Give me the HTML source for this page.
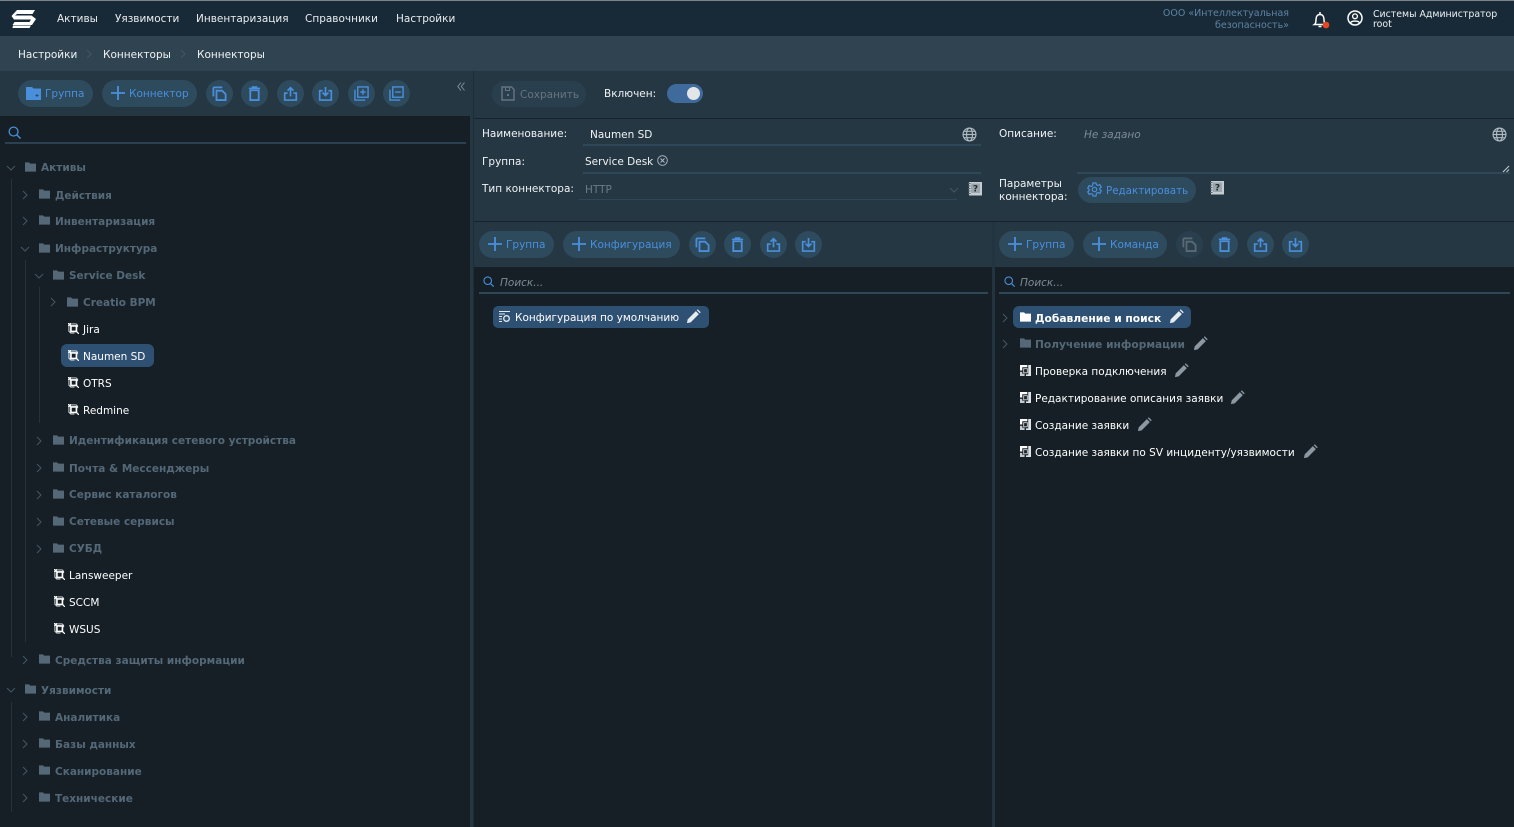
<!DOCTYPE html>
<html lang="ru">
<head>
<meta charset="utf-8">
<title>Коннекторы</title>
<style>
html,body{margin:0;padding:0;width:1514px;height:827px;overflow:hidden;background:#243743;font-family:"DejaVu Sans","Liberation Sans",sans-serif;font-size:10.5px;color:#fff}
.a{position:absolute}
.t{position:absolute;line-height:16px;white-space:nowrap;margin-top:1px}
.btn{position:absolute;height:27px;border-radius:14px;background:#2e4a5d;color:#4a8fdb}
.btn span{position:absolute;line-height:28px;white-space:nowrap}
.c{position:absolute;width:27px;height:27px;border-radius:50%;background:#2e4a5d}
.c svg,.btn svg{position:absolute}
.f{font-weight:bold;color:#546878}
.w{color:#fff}
.n{margin-top:0}
.ln{position:absolute;width:1px;background:#22333e}
svg{overflow:visible}
</style>
</head>
<body>
<svg width="0" height="0" style="position:absolute">
<defs>
<symbol id="folder" viewBox="0 0 12 10"><path d="M0 0h4.500l1.200 1.300H12V10H0z" fill="currentColor"/></symbol>
<symbol id="chr" viewBox="0 0 10 10"><path d="M3 1l4 4-4 4" fill="none" stroke="#465764" stroke-width="1"/></symbol>
<symbol id="chd" viewBox="0 0 10 10"><path d="M1 3l4 4 4-4" fill="none" stroke="#465764" stroke-width="1"/></symbol>
<symbol id="conn" viewBox="0 0 12 12"><path d="M0 0l2.500 2.500M9.500 9.500L12 12M0 2.500h2.500V0" stroke="#fff" stroke-width="1.300" fill="none"/><path d="M3 1h6l1.500 1.500v2M1 3v6l2 2h4" stroke="#e6ebee" stroke-width="1" fill="none"/><rect x="3.200" y="3.200" width="6" height="6" fill="#151f25" stroke="#fff" stroke-width="1.800"/></symbol>
<symbol id="pen" viewBox="0 0 16 16"><path d="M1 15l.8-4L10.500 2.300l3.200 3.200L5 14.200z" fill="#8c99a2"/><path d="M11.500 1.300l1-1 3.200 3.200-1 1z" fill="#8c99a2"/></symbol>
<symbol id="penw" viewBox="0 0 16 16"><path d="M1 15l.8-4L10.500 2.300l3.200 3.200L5 14.200z" fill="#e6ebee"/><path d="M11.500 1.300l1-1 3.200 3.200-1 1z" fill="#e6ebee"/></symbol>
<symbol id="cmd" viewBox="0 0 12 12"><path d="M0 0h8v2.500H2.500V6H0z" fill="#fff"/><path d="M0 7.500h2.500v2H5V12H0z" fill="#c4cacf"/><rect x="4" y="4" width="4" height="4.500" fill="none" stroke="#c9ced2" stroke-width="1"/><path d="M9 0h3v12H6.500v-1.800H9z" fill="#dfe3e6"/></symbol>
<symbol id="copy" viewBox="0 0 16 16"><path d="M1.500 11V2.500a1 1 0 0 1 1-1H11" fill="none" stroke="currentColor" stroke-width="1.900"/><path d="M4.800 5h6l3.700 3.700v6.300H4.800z" fill="none" stroke="currentColor" stroke-width="1.900"/></symbol>
<symbol id="trash" viewBox="0 0 16 16"><path d="M2 2.500h12M5 1h6" stroke="currentColor" stroke-width="1.600" fill="none"/><path d="M3.500 4.500h9V15h-9z" fill="none" stroke="currentColor" stroke-width="1.900"/></symbol>
<symbol id="up" viewBox="0 0 16 16"><path d="M8 11V2M4.800 5L8 1.800 11.200 5" fill="none" stroke="currentColor" stroke-width="1.800"/><path d="M5 7.500H1.800V15h12.400V7.500H11" fill="none" stroke="currentColor" stroke-width="1.800"/></symbol>
<symbol id="down" viewBox="0 0 16 16"><path d="M8 1v9M4.800 7L8 10.200 11.200 7" fill="none" stroke="currentColor" stroke-width="1.800"/><path d="M5 5H1.800v10h12.400V5H11" fill="none" stroke="currentColor" stroke-width="1.800"/></symbol>
<symbol id="addb" viewBox="0 0 16 16"><rect x="4" y="1" width="11" height="11" fill="none" stroke="currentColor" stroke-width="1.500"/><path d="M1 4v11h11M9.500 3.500v6M6.500 6.500h6" fill="none" stroke="currentColor" stroke-width="1.500"/></symbol>
<symbol id="remb" viewBox="0 0 16 16"><rect x="4" y="1" width="11" height="11" fill="none" stroke="currentColor" stroke-width="1.500"/><path d="M1 4v11h11M6.500 6.500h6" fill="none" stroke="currentColor" stroke-width="1.500"/></symbol>
<symbol id="plus" viewBox="0 0 14 14"><path d="M7 0v14M0 7h14" stroke="currentColor" stroke-width="1.800"/></symbol>
<symbol id="globe" viewBox="0 0 14 14"><g fill="none" stroke="#aeb9c1" stroke-width="1.100"><circle cx="7" cy="7" r="6"/><ellipse cx="7" cy="7" rx="2.800" ry="6"/><path d="M1 7h12M1.800 4h10.400M1.800 10h10.400"/></g></symbol>
<symbol id="help" viewBox="0 0 14 14"><path d="M1 0h13v13.500H1z" fill="#c4ccd1"/><path d="M3 1.500h9v9.500H3z" fill="#9aa5ac"/><path d="M0 1.500h2.500M0 4h2.500M0 6.500h2.500M0 9h2.500M0 11.500h2.500" stroke="#566570" stroke-width="1"/><text x="7.500" y="9.500" font-size="9" font-weight="bold" text-anchor="middle" fill="#1e2b33" font-family="DejaVu Sans">?</text></symbol>
<symbol id="srch" viewBox="0 0 14 14"><circle cx="6" cy="6" r="4.800" fill="none" stroke="currentColor" stroke-width="1.400"/><path d="M9.500 9.500l4 4" stroke="currentColor" stroke-width="1.500"/></symbol>
</defs>
</svg>

<!-- Top bar -->
<div class="a" style="left:0;top:0;width:1514px;height:36px;background:#182a37"></div>
<div class="a" style="left:0;top:0;width:1514px;height:1px;background:#7d8286"></div>
<svg class="a" style="left:11px;top:9px" width="26" height="20" viewBox="0 0 26 20"><path d="M6 1h18l-2.500 4H6L4 6.500h16.500l4.500 3.500-4 6H1.500l2-3h15l1.500-2.500H3L0.500 7z" fill="#fff"/><path d="M2 16.500h18l-1.500 2.500H1.500z" fill="#fff"/></svg>
<div class="t n" style="left:57px;top:11px;color:#e9edf0">Активы</div>
<div class="t n" style="left:115px;top:11px;color:#e9edf0">Уязвимости</div>
<div class="t n" style="left:196px;top:11px;color:#e9edf0">Инвентаризация</div>
<div class="t n" style="left:305px;top:11px;color:#e9edf0">Справочники</div>
<div class="t n" style="left:396px;top:11px;color:#e9edf0">Настройки</div>
<div class="t n" style="right:225px;top:8px;color:#5e83a3;text-align:right;line-height:11.500px;font-size:9.500px">ООО «Интеллектуальная<br>безопасность»</div>
<svg class="a" style="left:1313px;top:11px" width="17" height="18" viewBox="0 0 17 18"><path d="M1.500 13.500c1.500-1 1.500-3 1.500-5 0-3 1.500-5 4-5s4 2 4 5c0 2 0 4 1.500 5z" fill="none" stroke="#fff" stroke-width="1.500"/><path d="M5.500 15.500h3" stroke="#fff" stroke-width="1.500"/><circle cx="7" cy="2" r="1" fill="#fff"/><circle cx="13" cy="14" r="3.300" fill="#e8481f"/></svg>
<svg class="a" style="left:1347px;top:10px" width="16" height="16" viewBox="0 0 16 16"><circle cx="8" cy="8" r="7" fill="none" stroke="#fff" stroke-width="1.500"/><circle cx="8" cy="6.300" r="2.400" fill="none" stroke="#fff" stroke-width="1.300"/><path d="M3.500 12.800c1-2.300 8-2.300 9 0" fill="none" stroke="#fff" stroke-width="1.300"/></svg>
<div class="t n" style="left:1373px;top:10px;line-height:10px;font-size:9.400px;color:#eef1f3">Системы Администратор<br>root</div>

<!-- Breadcrumb -->
<div class="a" style="left:0;top:36px;width:1514px;height:35px;background:#2f4450"></div>
<div class="t" style="left:18px;top:46px;color:#f0f3f5">Настройки</div>
<svg class="a" style="left:84px;top:49px" width="10" height="10"><use href="#chr"/></svg>
<div class="t" style="left:103px;top:46px;color:#f0f3f5">Коннекторы</div>
<svg class="a" style="left:178px;top:49px" width="10" height="10"><use href="#chr"/></svg>
<div class="t" style="left:197px;top:46px;color:#f0f3f5">Коннекторы</div>

<!-- Left panel toolbar -->
<div class="btn" style="left:18px;top:80px;width:75px"><svg style="left:8px;top:7px" width="15" height="13" viewBox="0 0 15 13"><path d="M0 0h6l1.500 1.500H15V13H0z" fill="#4a8fdb"/><path d="M9.500 8.500h3M11 7v3" stroke="#2e4a5d" stroke-width="1"/></svg><span style="left:27px;line-height:29px">Группа</span></div>
<div class="btn" style="left:102px;top:80px;width:95px"><svg style="left:9px;top:6px;color:#4a8fdb" width="14" height="14"><use href="#plus"/></svg><span style="left:27px;line-height:29px">Коннектор</span></div>
<div class="c" style="left:206px;top:80px;color:#4a8fdb"><svg style="left:6px;top:6px" width="15" height="15"><use href="#copy"/></svg></div>
<div class="c" style="left:241px;top:80px;color:#4a8fdb"><svg style="left:6px;top:6px" width="15" height="15"><use href="#trash"/></svg></div>
<div class="c" style="left:277px;top:80px;color:#4a8fdb"><svg style="left:6px;top:6px" width="15" height="15"><use href="#up"/></svg></div>
<div class="c" style="left:312px;top:80px;color:#4a8fdb"><svg style="left:6px;top:6px" width="15" height="15"><use href="#down"/></svg></div>
<div class="c" style="left:348px;top:80px;color:#4a8fdb"><svg style="left:6px;top:6px" width="15" height="15"><use href="#addb"/></svg></div>
<div class="c" style="left:383px;top:80px;color:#4a8fdb"><svg style="left:6px;top:6px" width="15" height="15"><use href="#remb"/></svg></div>
<svg class="a" style="left:457px;top:82px" width="8" height="9" viewBox="0 0 8 9"><path d="M4 .5L.8 4.500 4 8.500M7.500 .5L4.300 4.500 7.500 8.500" fill="none" stroke="#7d8d98" stroke-width="1"/></svg>

<!-- Left tree -->
<div class="a" style="left:0;top:116px;width:470px;height:711px;background:#151f25"></div>
<div class="a" style="left:5px;top:142px;width:461px;height:2px;background:#2b4050"></div>
<svg class="a" style="left:8px;top:126px;color:#4a8fdb" width="13" height="13"><use href="#srch"/></svg>

<div class="ln" style="left:11px;top:179px;height:478px"></div>
<div class="ln" style="left:25px;top:260px;height:382px"></div>
<div class="ln" style="left:39px;top:287px;height:136px"></div>
<div class="ln" style="left:11px;top:702px;height:110px"></div>

<svg class="a" style="left:6px;top:163px" width="10" height="10"><use href="#chd"/></svg>
<svg class="a f" style="left:25px;top:162px" width="11" height="10"><use href="#folder"/></svg>
<div class="t f" style="left:41px;top:159px">Активы</div>

<svg class="a" style="left:20px;top:190px" width="10" height="10"><use href="#chr"/></svg>
<svg class="a f" style="left:39px;top:189px" width="11" height="10"><use href="#folder"/></svg>
<div class="t f" style="left:55px;top:187px">Действия</div>

<svg class="a" style="left:20px;top:216px" width="10" height="10"><use href="#chr"/></svg>
<svg class="a f" style="left:39px;top:215px" width="11" height="10"><use href="#folder"/></svg>
<div class="t f" style="left:55px;top:213px">Инвентаризация</div>

<svg class="a" style="left:20px;top:244px" width="10" height="10"><use href="#chd"/></svg>
<svg class="a f" style="left:39px;top:243px" width="11" height="10"><use href="#folder"/></svg>
<div class="t f" style="left:55px;top:240px">Инфраструктура</div>

<svg class="a" style="left:34px;top:271px" width="10" height="10"><use href="#chd"/></svg>
<svg class="a f" style="left:53px;top:270px" width="11" height="10"><use href="#folder"/></svg>
<div class="t f" style="left:69px;top:267px">Service Desk</div>

<svg class="a" style="left:48px;top:297px" width="10" height="10"><use href="#chr"/></svg>
<svg class="a f" style="left:67px;top:297px" width="11" height="10"><use href="#folder"/></svg>
<div class="t f" style="left:83px;top:294px">Creatio BPM</div>

<svg class="a" style="left:68px;top:323px" width="11" height="11"><use href="#conn"/></svg>
<div class="t w" style="left:83px;top:321px">Jira</div>

<div class="a" style="left:61px;top:344px;width:93px;height:23px;border-radius:6px;background:#2e5072"></div>
<svg class="a" style="left:68px;top:350px" width="11" height="11"><use href="#conn"/></svg>
<div class="t w" style="left:83px;top:348px">Naumen SD</div>

<svg class="a" style="left:68px;top:377px" width="11" height="11"><use href="#conn"/></svg>
<div class="t w" style="left:83px;top:375px">OTRS</div>

<svg class="a" style="left:68px;top:404px" width="11" height="11"><use href="#conn"/></svg>
<div class="t w" style="left:83px;top:402px">Redmine</div>

<svg class="a" style="left:34px;top:436px" width="10" height="10"><use href="#chr"/></svg>
<svg class="a f" style="left:53px;top:435px" width="11" height="10"><use href="#folder"/></svg>
<div class="t f" style="left:69px;top:432px;font-size:10.530px">Идентификация сетевого устройства</div>

<svg class="a" style="left:34px;top:463px" width="10" height="10"><use href="#chr"/></svg>
<svg class="a f" style="left:53px;top:462px" width="11" height="10"><use href="#folder"/></svg>
<div class="t f" style="left:69px;top:460px">Почта &amp; Мессенджеры</div>

<svg class="a" style="left:34px;top:490px" width="10" height="10"><use href="#chr"/></svg>
<svg class="a f" style="left:53px;top:489px" width="11" height="10"><use href="#folder"/></svg>
<div class="t f" style="left:69px;top:486px">Сервис каталогов</div>

<svg class="a" style="left:34px;top:517px" width="10" height="10"><use href="#chr"/></svg>
<svg class="a f" style="left:53px;top:516px" width="11" height="10"><use href="#folder"/></svg>
<div class="t f" style="left:69px;top:513px">Сетевые сервисы</div>

<svg class="a" style="left:34px;top:544px" width="10" height="10"><use href="#chr"/></svg>
<svg class="a f" style="left:53px;top:543px" width="11" height="10"><use href="#folder"/></svg>
<div class="t f" style="left:69px;top:540px">СУБД</div>

<svg class="a" style="left:54px;top:569px" width="11" height="11"><use href="#conn"/></svg>
<div class="t w" style="left:69px;top:567px">Lansweeper</div>
<svg class="a" style="left:54px;top:596px" width="11" height="11"><use href="#conn"/></svg>
<div class="t w" style="left:69px;top:594px">SCCM</div>
<svg class="a" style="left:54px;top:623px" width="11" height="11"><use href="#conn"/></svg>
<div class="t w" style="left:69px;top:621px">WSUS</div>

<svg class="a" style="left:20px;top:655px" width="10" height="10"><use href="#chr"/></svg>
<svg class="a f" style="left:39px;top:654px" width="11" height="10"><use href="#folder"/></svg>
<div class="t f" style="left:55px;top:652px">Средства защиты информации</div>

<svg class="a" style="left:6px;top:685px" width="10" height="10"><use href="#chd"/></svg>
<svg class="a f" style="left:25px;top:684px" width="11" height="10"><use href="#folder"/></svg>
<div class="t f" style="left:41px;top:682px">Уязвимости</div>

<svg class="a" style="left:20px;top:712px" width="10" height="10"><use href="#chr"/></svg>
<svg class="a f" style="left:39px;top:711px" width="11" height="10"><use href="#folder"/></svg>
<div class="t f" style="left:55px;top:709px">Аналитика</div>

<svg class="a" style="left:20px;top:739px" width="10" height="10"><use href="#chr"/></svg>
<svg class="a f" style="left:39px;top:738px" width="11" height="10"><use href="#folder"/></svg>
<div class="t f" style="left:55px;top:736px">Базы данных</div>

<svg class="a" style="left:20px;top:766px" width="10" height="10"><use href="#chr"/></svg>
<svg class="a f" style="left:39px;top:765px" width="11" height="10"><use href="#folder"/></svg>
<div class="t f" style="left:55px;top:763px">Сканирование</div>

<svg class="a" style="left:20px;top:793px" width="10" height="10"><use href="#chr"/></svg>
<svg class="a f" style="left:39px;top:792px" width="11" height="10"><use href="#folder"/></svg>
<div class="t f" style="left:55px;top:790px">Технические</div>

<!-- Right side: top bar -->
<div class="a" style="left:473px;top:71px;width:1px;height:756px;background:#1d2d38"></div>
<div class="btn" style="left:492px;top:81px;width:94px;height:26px;background:#2a3f4d;color:#66757f"><svg style="left:9px;top:5px" width="14" height="15" viewBox="0 0 14 15"><path d="M1 1h9.500L13 3.500V14H1z" fill="none" stroke="#66757f" stroke-width="1.400"/><path d="M4.500 1v3.500h4V1" fill="none" stroke="#66757f" stroke-width="1"/><rect x="6" y="8" width="2" height="2" fill="#66757f"/></svg><span style="left:28px;line-height:27px;top:.5px">Сохранить</span></div>
<div class="t" style="left:604px;top:85px;color:#f1f4f6">Включен:</div>
<div class="a" style="left:667px;top:84px;width:36px;height:19px;border-radius:10px;background:#3f6a9c"></div>
<div class="a" style="left:687px;top:87px;width:13px;height:13px;border-radius:50%;background:#e2e6e9"></div>
<div class="a" style="left:474px;top:118px;width:1040px;height:1px;background:#17242d"></div>

<!-- Form left -->
<div class="t" style="left:482px;top:125px;color:#f1f4f6">Наименование:</div>
<div class="t" style="left:590px;top:126px;color:#f1f4f6">Naumen SD</div>
<svg class="a" style="left:962px;top:127px" width="15" height="15"><use href="#globe"/></svg>
<div class="a" style="left:583px;top:144px;width:398px;height:2px;background:#2f4858"></div>
<div class="t" style="left:482px;top:153px;color:#f1f4f6">Группа:</div>
<div class="t" style="left:585px;top:153px;color:#f1f4f6">Service Desk</div>
<svg class="a" style="left:657px;top:155px" width="11" height="11" viewBox="0 0 11 11"><circle cx="5.500" cy="5.500" r="4.800" fill="none" stroke="#b4bec5" stroke-width=".9"/><path d="M3.500 3.500l4 4M7.500 3.500l-4 4" stroke="#b4bec5" stroke-width=".9"/></svg>
<div class="a" style="left:583px;top:172px;width:398px;height:2px;background:#2f4858"></div>
<div class="t" style="left:482px;top:180px;color:#f1f4f6">Тип коннектора:</div>
<div class="t" style="left:585px;top:181px;color:#6b7b86">HTTP</div>
<svg class="a" style="left:949px;top:185px" width="10" height="10"><use href="#chd"/></svg>
<div class="a" style="left:579px;top:199px;width:378px;height:1px;background:#2f4858"></div>
<svg class="a" style="left:968px;top:182px" width="14" height="14"><use href="#help"/></svg>

<!-- Form right -->
<div class="t" style="left:999px;top:125px;color:#f1f4f6">Описание:</div>
<div class="t" style="left:1084px;top:126px;color:#7d8b95;font-style:italic">Не задано</div>
<svg class="a" style="left:1492px;top:127px" width="15" height="15"><use href="#globe"/></svg>
<div class="a" style="left:1077px;top:172px;width:433px;height:2px;background:#2f4858"></div>
<svg class="a" style="left:1502px;top:165px" width="8" height="8" viewBox="0 0 8 8"><path d="M1 7l6-6M4.500 7L7 4.500" stroke="#c4ccd1" stroke-width="1"/></svg>
<div class="t" style="left:999px;top:177px;line-height:13px;color:#f1f4f6">Параметры<br>коннектора:</div>
<div class="btn" style="left:1078px;top:177px;width:118px;height:26px"><svg style="left:9px;top:5px" width="15" height="15" viewBox="0 0 15 15"><path d="M6 1h3l.5 1.800 1.600.7 1.700-.9 1.500 2.500-1.400 1.200v1.400l1.400 1.200-1.500 2.500-1.700-.9-1.600.7L9 14H6l-.5-1.800-1.600-.7-1.700.9L.7 9.900l1.400-1.200V7.300L.7 6.100l1.500-2.500 1.700.9 1.600-.7z" fill="none" stroke="#4a8fdb" stroke-width="1.200"/><circle cx="7.500" cy="7.500" r="2.200" fill="none" stroke="#4a8fdb" stroke-width="1.200"/></svg><span style="left:28px;line-height:28px;font-size:10.300px">Редактировать</span></div>
<svg class="a" style="left:1210px;top:181px" width="14" height="14"><use href="#help"/></svg>

<div class="a" style="left:474px;top:221px;width:1040px;height:1px;background:#17242d"></div>
<div class="a" style="left:992px;top:222px;width:3px;height:605px;background:#22343f"></div>

<!-- Config toolbar -->
<div class="btn" style="left:479px;top:231px;width:75px"><svg style="left:9px;top:6px;color:#4a8fdb" width="14" height="14"><use href="#plus"/></svg><span style="left:27px">Группа</span></div>
<div class="btn" style="left:563px;top:231px;width:117px"><svg style="left:9px;top:6px;color:#4a8fdb" width="14" height="14"><use href="#plus"/></svg><span style="left:27px">Конфигурация</span></div>
<div class="c" style="left:689px;top:231px;color:#4a8fdb"><svg style="left:6px;top:6px" width="15" height="15"><use href="#copy"/></svg></div>
<div class="c" style="left:724px;top:231px;color:#4a8fdb"><svg style="left:6px;top:6px" width="15" height="15"><use href="#trash"/></svg></div>
<div class="c" style="left:760px;top:231px;color:#4a8fdb"><svg style="left:6px;top:6px" width="15" height="15"><use href="#up"/></svg></div>
<div class="c" style="left:795px;top:231px;color:#4a8fdb"><svg style="left:6px;top:6px" width="15" height="15"><use href="#down"/></svg></div>

<!-- Command toolbar -->
<div class="btn" style="left:999px;top:231px;width:75px"><svg style="left:9px;top:6px;color:#4a8fdb" width="14" height="14"><use href="#plus"/></svg><span style="left:27px">Группа</span></div>
<div class="btn" style="left:1083px;top:231px;width:84px"><svg style="left:9px;top:6px;color:#4a8fdb" width="14" height="14"><use href="#plus"/></svg><span style="left:27px">Команда</span></div>
<div class="c" style="left:1176px;top:231px;background:#2a3f4d;color:#5a6a75"><svg style="left:6px;top:6px" width="15" height="15"><use href="#copy"/></svg></div>
<div class="c" style="left:1211px;top:231px;color:#4a8fdb"><svg style="left:6px;top:6px" width="15" height="15"><use href="#trash"/></svg></div>
<div class="c" style="left:1247px;top:231px;color:#4a8fdb"><svg style="left:6px;top:6px" width="15" height="15"><use href="#up"/></svg></div>
<div class="c" style="left:1282px;top:231px;color:#4a8fdb"><svg style="left:6px;top:6px" width="15" height="15"><use href="#down"/></svg></div>

<!-- Config list -->
<div class="a" style="left:474px;top:267px;width:518px;height:560px;background:#151f25"></div>
<div class="a" style="left:479px;top:292px;width:509px;height:2px;background:#2f4858"></div>
<svg class="a" style="left:483px;top:276px;color:#4a8fdb" width="11" height="11"><use href="#srch"/></svg>
<div class="t" style="left:500px;top:274px;color:#7d8b95;font-style:italic">Поиск...</div>
<div class="a" style="left:493px;top:306px;width:216px;height:22px;border-radius:5px;background:#2e5072"></div>
<svg class="a" style="left:499px;top:311px" width="12" height="12" viewBox="0 0 12 12"><path d="M0 .5h11M0 3h6M0 5.500h3M0 8h3M0 10.500h3" stroke="#e6ebee" stroke-width="1" fill="none"/><circle cx="7.500" cy="7.500" r="2.800" fill="none" stroke="#e6ebee" stroke-width="1.300"/></svg>
<div class="t w" style="left:515px;top:309px">Конфигурация по умолчанию</div>
<svg class="a" style="left:686px;top:309px" width="15" height="15"><use href="#penw"/></svg>

<!-- Command list -->
<div class="a" style="left:995px;top:267px;width:519px;height:560px;background:#151f25"></div>
<div class="a" style="left:999px;top:292px;width:511px;height:2px;background:#2f4858"></div>
<svg class="a" style="left:1004px;top:276px;color:#4a8fdb" width="11" height="11"><use href="#srch"/></svg>
<div class="t" style="left:1020px;top:274px;color:#7d8b95;font-style:italic">Поиск...</div>

<svg class="a" style="left:1000px;top:313px" width="10" height="10"><use href="#chr"/></svg>
<div class="a" style="left:1013px;top:306px;width:178px;height:22px;border-radius:6px;background:#2e5072"></div>
<svg class="a" style="left:1020px;top:312px;color:#fff" width="11" height="10"><use href="#folder"/></svg>
<div class="t" style="left:1035px;top:310px;font-weight:bold;color:#fff;font-size:10.700px">Добавление и поиск</div>
<svg class="a" style="left:1169px;top:309px" width="15" height="15"><use href="#penw"/></svg>

<svg class="a" style="left:1000px;top:339px" width="10" height="10"><use href="#chr"/></svg>
<svg class="a f" style="left:1020px;top:338px" width="11" height="10"><use href="#folder"/></svg>
<div class="t f" style="left:1035px;top:336px;font-size:10.630px">Получение информации</div>
<svg class="a" style="left:1193px;top:336px" width="15" height="15"><use href="#pen"/></svg>

<svg class="a" style="left:1020px;top:365px" width="11" height="11"><use href="#cmd"/></svg>
<div class="t w" style="left:1035px;top:363px">Проверка подключения</div>
<svg class="a" style="left:1174px;top:363px" width="15" height="15"><use href="#pen"/></svg>

<svg class="a" style="left:1020px;top:392px" width="11" height="11"><use href="#cmd"/></svg>
<div class="t w" style="left:1035px;top:390px">Редактирование описания заявки</div>
<svg class="a" style="left:1230px;top:390px" width="15" height="15"><use href="#pen"/></svg>

<svg class="a" style="left:1020px;top:419px" width="11" height="11"><use href="#cmd"/></svg>
<div class="t w" style="left:1035px;top:417px">Создание заявки</div>
<svg class="a" style="left:1137px;top:417px" width="15" height="15"><use href="#pen"/></svg>

<svg class="a" style="left:1020px;top:446px" width="11" height="11"><use href="#cmd"/></svg>
<div class="t w" style="left:1035px;top:444px">Создание заявки по SV инциденту/уязвимости</div>
<svg class="a" style="left:1303px;top:444px" width="15" height="15"><use href="#pen"/></svg>
</body>
</html>
